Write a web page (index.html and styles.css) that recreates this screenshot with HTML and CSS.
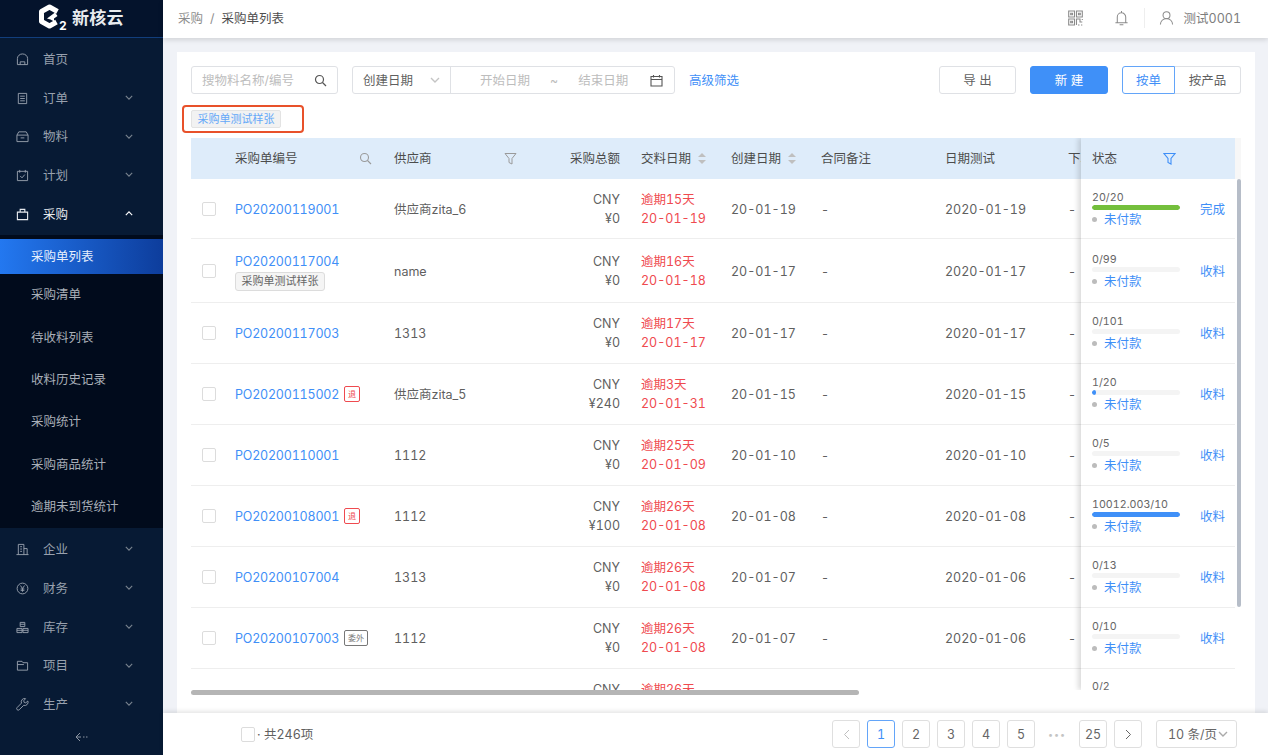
FILE: index.html
```html
<!DOCTYPE html>
<html lang="zh-CN">
<head>
<meta charset="utf-8">
<title>采购单列表</title>
<link rel="stylesheet" href="styles.css">
</head>
<body>
<svg class="defs" width="0" height="0">
  <symbol id="chev" viewBox="0 0 10 6"><path d="M1 1l4 4 4-4" fill="none" stroke="currentColor" stroke-width="1.4"/></symbol>
</svg>
<aside class="sidebar">
  <div class="brand">
    <svg class="logo" width="26" height="26" viewBox="0 0 26 26"><path d="M20.500 7.500L12.500 3 4.500 7.500v10l8 4.500 7-4" fill="none" stroke="#fff" stroke-width="5" stroke-linejoin="round"/><path d="M10 14.500l8-6 2.500 3.500-3.500 2.500v3l-3.500-2z" fill="#fff"/></svg>
    <span class="logo-sub">2</span>
    <span class="brand-name">新核云</span>
  </div>
  <nav class="nav">
    <a class="nav-item"><svg class="nav-icon" viewBox="0 0 14 14"><path d="M1.500 12.500V6a5.500 5 0 0 1 11 0v6.500zM4.500 12.500v-3h5v3" fill="none" stroke="currentColor"/></svg><span>首页</span></a>
    <a class="nav-item"><svg class="nav-icon" viewBox="0 0 14 14"><path d="M2.500 1.500h9v11h-9zM4.500 4.500h5M4.500 7h5M4.500 9.500h5" fill="none" stroke="currentColor"/></svg><span>订单</span><svg class="chev"><use href="#chev"/></svg></a>
    <a class="nav-item"><svg class="nav-icon" viewBox="0 0 14 14"><path d="M3 2h8l2 3.500V12.500H1V5.500zM1 5.500h12M5 8.500h4" fill="none" stroke="currentColor"/></svg><span>物料</span><svg class="chev"><use href="#chev"/></svg></a>
    <a class="nav-item"><svg class="nav-icon" viewBox="0 0 14 14"><path d="M1.500 2.500h11v10h-11zM4 1v3M10 1v3M4.500 7.500l2 2 3-3.500" fill="none" stroke="currentColor"/></svg><span>计划</span><svg class="chev"><use href="#chev"/></svg></a>
    <a class="nav-item open"><svg class="nav-icon" viewBox="0 0 14 14"><path d="M1.500 4.500h11v8h-11zM4.500 4.500V1.500h5v3" fill="none" stroke="currentColor" stroke-width="1.200"/></svg><span>采购</span><svg class="chev up"><use href="#chev"/></svg></a>
    <div class="subnav">
      <a class="sub-item active">采购单列表</a>
      <a class="sub-item">采购清单</a>
      <a class="sub-item">待收料列表</a>
      <a class="sub-item">收料历史记录</a>
      <a class="sub-item">采购统计</a>
      <a class="sub-item">采购商品统计</a>
      <a class="sub-item">逾期未到货统计</a>
    </div>
    <a class="nav-item"><svg class="nav-icon" viewBox="0 0 14 14"><path d="M0.500 12.500h13M2.500 12.500v-11h6v11M8.500 6h3.500v6.500M4.500 4h2M4.500 6.500h2M4.500 9h2" fill="none" stroke="currentColor"/></svg><span>企业</span><svg class="chev"><use href="#chev"/></svg></a>
    <a class="nav-item"><svg class="nav-icon" viewBox="0 0 14 14"><circle cx="7" cy="7" r="5.800" fill="none" stroke="currentColor"/><path d="M4.800 3.800L7 7l2.200-3.200M7 7v3.500M5 7.500h4M5 9h4" fill="none" stroke="currentColor"/></svg><span>财务</span><svg class="chev"><use href="#chev"/></svg></a>
    <a class="nav-item"><svg class="nav-icon" viewBox="0 0 14 14"><path d="M4.500 1.500h5v4.500h-5zM1 8h5.500v4.500H1zM7.500 8H13v4.500H7.500zM1 10h12M4.500 3.500h5" fill="none" stroke="currentColor"/></svg><span>库存</span><svg class="chev"><use href="#chev"/></svg></a>
    <a class="nav-item"><svg class="nav-icon" viewBox="0 0 14 14"><path d="M1.500 2.500h5l1 1.500h5v8h-11zM1.500 6h7" fill="none" stroke="currentColor"/></svg><span>项目</span><svg class="chev"><use href="#chev"/></svg></a>
    <a class="nav-item"><svg class="nav-icon" viewBox="0 0 14 14"><path d="M12.800 3.200l-2.300 2-1.700-.5-.5-1.700 2-2.300a3.600 3.600 0 0 0-4.400 4.800L1.200 10.300a1.500 1.500 0 0 0 2.300 2.300l4.800-4.700a3.600 3.600 0 0 0 4.500-4.700z" fill="none" stroke="currentColor"/></svg><span>生产</span><svg class="chev"><use href="#chev"/></svg></a>
  </nav>
  <div class="collapse"><svg width="14" height="10" viewBox="0 0 14 10"><path d="M5 1L1 5l4 4M1 5h5M8 5h1.500M11 5h1.500" fill="none" stroke="currentColor"/></svg></div>
</aside>

<div class="main">
  <header class="topbar">
    <div class="crumbs"><span>采购</span><span class="sep">/</span><span class="current">采购单列表</span></div>
    <div class="top-actions">
      <svg class="top-icon" viewBox="0 0 15 16"><path d="M.700 1h5.800v6H.700zM8.500 1h5.800v6H8.500zM.700 9h5.800v6H.700zM2.700 3.300h1.800v1.500H2.700zM10.500 3.300h1.800v1.500h-1.800zM2.700 11.300h1.800v1.500H2.700zM8.500 15v-6h3.500v3h2.300M14.300 9v1M10 15h1.500M13 15h1.300" fill="none" stroke="currentColor" stroke-width="1.100"/></svg>
      <svg class="top-icon bell" viewBox="0 0 16 16"><path d="M1.500 13h13M3.500 13V7a4.500 4.500 0 0 1 9 0v6M8 .500v2M6 15.200h4" fill="none" stroke="currentColor" stroke-width="1.100"/></svg>
      <i class="top-divider"></i>
      <svg class="top-icon user" viewBox="0 0 16 16"><circle cx="8" cy="5" r="3.700" fill="none" stroke="currentColor" stroke-width="1.100"/><path d="M1.500 15a6.500 6.500 0 0 1 13 0" fill="none" stroke="currentColor" stroke-width="1.100"/></svg>
      <span class="user-name">测试0001</span>
    </div>
  </header>

  <div class="content">
    <section class="card">
      <div class="toolbar">
        <div class="search field"><span class="ph">搜物料名称/编号</span><svg class="ico-dark" width="13" height="13" viewBox="0 0 13 13"><circle cx="5.500" cy="5.500" r="4" fill="none" stroke="currentColor" stroke-width="1.200"/><path d="M8.500 8.500l3.500 3.500" stroke="currentColor" stroke-width="1.200"/></svg></div>
        <div class="dates field">
          <div class="date-type"><span>创建日期</span><svg class="date-chev"><use href="#chev"/></svg></div>
          <div class="date-range"><span class="ph start">开始日期</span><span class="ph tilde">~</span><span class="ph end">结束日期</span><svg class="ico-dark" width="13" height="13" viewBox="0 0 13 13"><path d="M1 2.500h11v9.500H1zM1 5.500h11M3.500 1v2.500M9.500 1v2.500" fill="none" stroke="currentColor" stroke-width="1.100"/></svg></div>
        </div>
        <a class="adv">高级筛选</a>
        <div class="tool-right">
          <button class="btn export">导 出</button>
          <button class="btn primary">新 建</button>
          <div class="seg"><button class="seg-btn on">按单</button><button class="seg-btn">按产品</button></div>
        </div>
      </div>

      <div class="tag-row"><div class="tag-frame"><span class="tag-blue">采购单测试样张</span></div></div>

      <div class="table-wrap">
        <div class="table">
          <div class="pane-scroll">
            <div class="row head">
              <div class="c-check"></div>
              <div class="c-no">采购单编号<svg class="head-ico" width="13" height="13" viewBox="0 0 13 13"><circle cx="5.500" cy="5.500" r="4" fill="none" stroke="currentColor" stroke-width="1.100"/><path d="M8.500 8.500l3.500 3.500" stroke="currentColor" stroke-width="1.100"/></svg></div>
              <div class="c-sup">供应商<svg class="head-ico filter" width="13" height="13" viewBox="0 0 13 13"><path d="M1 1.500h11L8 6.500V12L5 10.500V6.500z" fill="none" stroke="currentColor"/></svg></div>
              <div class="c-amt">采购总额</div>
              <div class="c-due sortable">交料日期<i class="sort"></i></div>
              <div class="c-date sortable">创建日期<i class="sort"></i></div>
              <div class="c-note">合同备注</div>
              <div class="c-test">日期测试</div>
              <div class="c-next">下单人</div>
            </div>
            <div class="row r60"><div class="c-check"><i class="cb"></i></div><div class="c-no"><a>PO20200119001</a></div><div class="c-sup">供应商zita_6</div><div class="c-amt">CNY<br>¥0</div><div class="c-due red">逾期15天<br>20-01-19</div><div class="c-date">20-01-19</div><div class="c-note">-</div><div class="c-test">2020-01-19</div><div class="c-next">-</div></div>
            <div class="row r64"><div class="c-check"><i class="cb"></i></div><div class="c-no stack"><a>PO20200117004</a><span class="tag-grey">采购单测试样张</span></div><div class="c-sup">name</div><div class="c-amt">CNY<br>¥0</div><div class="c-due red">逾期16天<br>20-01-18</div><div class="c-date">20-01-17</div><div class="c-note">-</div><div class="c-test">2020-01-17</div><div class="c-next">-</div></div>
            <div class="row"><div class="c-check"><i class="cb"></i></div><div class="c-no"><a>PO20200117003</a></div><div class="c-sup">1313</div><div class="c-amt">CNY<br>¥0</div><div class="c-due red">逾期17天<br>20-01-17</div><div class="c-date">20-01-17</div><div class="c-note">-</div><div class="c-test">2020-01-17</div><div class="c-next">-</div></div>
            <div class="row"><div class="c-check"><i class="cb"></i></div><div class="c-no"><a>PO20200115002</a><span class="mini red-mini">退</span></div><div class="c-sup">供应商zita_5</div><div class="c-amt">CNY<br>¥240</div><div class="c-due red">逾期3天<br>20-01-31</div><div class="c-date">20-01-15</div><div class="c-note">-</div><div class="c-test">2020-01-15</div><div class="c-next">-</div></div>
            <div class="row"><div class="c-check"><i class="cb"></i></div><div class="c-no"><a>PO20200110001</a></div><div class="c-sup">1112</div><div class="c-amt">CNY<br>¥0</div><div class="c-due red">逾期25天<br>20-01-09</div><div class="c-date">20-01-10</div><div class="c-note">-</div><div class="c-test">2020-01-10</div><div class="c-next">-</div></div>
            <div class="row"><div class="c-check"><i class="cb"></i></div><div class="c-no"><a>PO20200108001</a><span class="mini red-mini">退</span></div><div class="c-sup">1112</div><div class="c-amt">CNY<br>¥100</div><div class="c-due red">逾期26天<br>20-01-08</div><div class="c-date">20-01-08</div><div class="c-note">-</div><div class="c-test">2020-01-08</div><div class="c-next">-</div></div>
            <div class="row"><div class="c-check"><i class="cb"></i></div><div class="c-no"><a>PO20200107004</a></div><div class="c-sup">1313</div><div class="c-amt">CNY<br>¥0</div><div class="c-due red">逾期26天<br>20-01-08</div><div class="c-date">20-01-07</div><div class="c-note">-</div><div class="c-test">2020-01-06</div><div class="c-next">-</div></div>
            <div class="row"><div class="c-check"><i class="cb"></i></div><div class="c-no"><a>PO20200107003</a><span class="mini grey-mini">委外</span></div><div class="c-sup">1112</div><div class="c-amt">CNY<br>¥0</div><div class="c-due red">逾期26天<br>20-01-08</div><div class="c-date">20-01-07</div><div class="c-note">-</div><div class="c-test">2020-01-06</div><div class="c-next">-</div></div>
            <div class="row"><div class="c-check"><i class="cb"></i></div><div class="c-no"></div><div class="c-sup"></div><div class="c-amt">CNY<br>¥0</div><div class="c-due red">逾期26天<br>20-01-08</div><div class="c-date"></div><div class="c-note"></div><div class="c-test"></div><div class="c-next"></div></div>
          </div>
          <div class="pane-fixed">
            <div class="frow head"><span>状态</span><svg class="status-filter" width="13" height="13" viewBox="0 0 13 13"><path d="M1 1.500h11L8 6.500V12L5 10.500V6.500z" fill="none" stroke="currentColor" stroke-width="1.100"/></svg></div>
            <div class="frow r60"><div class="st"><div class="st-num">20/20</div><div class="bar"><i class="fill green full"></i></div><div class="pay"><i class="dot"></i>未付款</div></div><a class="act">完成</a></div>
            <div class="frow r64"><div class="st"><div class="st-num">0/99</div><div class="bar"></div><div class="pay"><i class="dot"></i>未付款</div></div><a class="act">收料</a></div>
            <div class="frow"><div class="st"><div class="st-num">0/101</div><div class="bar"></div><div class="pay"><i class="dot"></i>未付款</div></div><a class="act">收料</a></div>
            <div class="frow"><div class="st"><div class="st-num">1/20</div><div class="bar"><i class="fill blue small"></i></div><div class="pay"><i class="dot"></i>未付款</div></div><a class="act">收料</a></div>
            <div class="frow"><div class="st"><div class="st-num">0/5</div><div class="bar"></div><div class="pay"><i class="dot"></i>未付款</div></div><a class="act">收料</a></div>
            <div class="frow"><div class="st"><div class="st-num">10012.003/10</div><div class="bar"><i class="fill blue full"></i></div><div class="pay"><i class="dot"></i>未付款</div></div><a class="act">收料</a></div>
            <div class="frow"><div class="st"><div class="st-num">0/13</div><div class="bar"></div><div class="pay"><i class="dot"></i>未付款</div></div><a class="act">收料</a></div>
            <div class="frow"><div class="st"><div class="st-num">0/10</div><div class="bar"></div><div class="pay"><i class="dot"></i>未付款</div></div><a class="act">收料</a></div>
            <div class="frow"><div class="st clip-top"><div class="st-num">0/2</div></div></div>
          </div>
        </div>
        <div class="head-cap"></div>
        <div class="vbar"></div>
        <div class="hbar"></div>
      </div>
    </section>
  </div>

  <footer class="footer">
    <div class="foot-left"><i class="cb"></i><span>· 共246项</span></div>
    <div class="pager">
      <span class="pg muted"><svg width="7" height="11" viewBox="0 0 7 11"><path d="M6 1L1.500 5.500 6 10" fill="none" stroke="currentColor"/></svg></span>
      <span class="pg on">1</span><span class="pg">2</span><span class="pg">3</span><span class="pg">4</span><span class="pg">5</span>
      <span class="dots">•••</span>
      <span class="pg">25</span>
      <span class="pg"><svg width="7" height="11" viewBox="0 0 7 11"><path d="M1 1l4.500 4.500L1 10" fill="none" stroke="currentColor"/></svg></span>
      <span class="size">10 条/页<svg class="size-chev"><use href="#chev"/></svg></span>
    </div>
  </footer>
</div>
</body>
</html>
```
FILE: styles.css
```css
* { box-sizing: border-box; }
html, body { margin: 0; height: 100%; overflow: hidden; }
body {
  display: flex;
  width: 1268px;
  height: 755px;
  background: #f0f2f7;
  font: 12.5px/19px Inter, "Noto Sans CJK SC", sans-serif;
  font-variant-numeric: tabular-nums;
  color: #5f5f5f;
}
.defs { position: absolute; }
a { color: inherit; text-decoration: none; }
i { font-style: normal; }
button { font: inherit; cursor: pointer; }

/* sidebar */
.sidebar {
  width: 163px;
  flex: none;
  display: flex;
  flex-direction: column;
  background: #071a34;
  color: #98a1ae;
  position: relative;
}
.brand {
  height: 38px;
  flex: none;
  background: #04132c;
  border-bottom: 1px solid #123e7c;
  display: flex;
  align-items: center;
  padding-left: 37px;
  color: #fff;
}
.logo { margin-top: -4px; width: 26px; height: 26px; flex: none; }
.logo-sub { font-size: 12px; font-weight: 700; width: 8px; margin: 15px 0 0 -4px; line-height: 12px; }
.brand-name { font-size: 17px; font-weight: 700; letter-spacing: .2px; margin-left: 5px; color: #e8ebef; }
.nav { flex: 1; display: flex; flex-direction: column; padding-top: 2px; }
.nav-item {
  height: 38.750px;
  flex: none;
  display: flex;
  align-items: center;
  padding-left: 16px;
  position: relative;
}
.nav-item span { margin-left: 14px; }
.nav-icon { width: 13px; height: 13px; color: #98a1ae; flex: none; }
.chev { width: 8px; height: 5px; position: absolute; left: 125px; top: 16px; color: #79838f; }
.chev.up { transform: rotate(180deg); color: #fff; }
.nav-item.open, .nav-item.open .nav-icon { color: #e8ebef; }
.subnav {
  height: 293px;
  flex: none;
  margin: 1px 0 2.500px;
  background: #010b1c;
  padding-top: 4px;
  display: flex;
  flex-direction: column;
  color: #a9afb8;
}
.sub-item {
  height: 42.300px;
  flex: none;
  display: flex;
  align-items: center;
  padding-left: 31px;
}
.sub-item.active {
  height: 35px;
  color: #e6effc;
  background: linear-gradient(90deg, #2378f0, #0d3d9c);
}
.collapse {
  position: absolute;
  left: 75px;
  top: 732px;
  color: #8d96a3;
  line-height: 10px;
}

/* main */
.main { flex: 1; min-width: 0; display: flex; flex-direction: column; }
.topbar {
  height: 38px;
  flex: none;
  background: #fff;
  box-shadow: 0 2px 5px rgba(0,0,0,.13);
  display: flex;
  align-items: center;
  justify-content: space-between;
  padding: 0 27px 2px 15px;
  position: relative;
  z-index: 3;
}
.crumbs { display: flex; color: #8e8e8e; }
.sep { margin: 0 7px; }
.current { color: #4e4e4e; }
.top-actions { display: flex; align-items: center; color: #8b8b8b; }
.top-icon { width: 15px; height: 16px; flex: none; }
.bell { margin-left: 31px; }
.top-divider { width: 1px; height: 20px; background: #eee; margin: 0 14px 0 15px; }
.user { margin-right: 10px; }
.user-name { color: #7d7d7d; }

.content { flex: 1; min-height: 0; padding: 14px 13px 0 14px; }
.card { height: 100%; background: #fff; padding: 14px 14px 0; position: relative; }
.toolbar { display: flex; height: 28px; align-items: stretch; }
.field { border: 1px solid #dfe1e5; border-radius: 3px; display: flex; align-items: center; }
.ph { color: #bdbdbd; }
.ico-dark { color: #555; flex: none; }
.search { width: 147px; justify-content: space-between; padding: 0 10px; }
.dates { width: 323px; margin-left: 14px; }
.date-type { width: 98px; height: 100%; border-right: 1px solid #dfe1e5; display: flex; align-items: center; justify-content: space-between; padding: 0 10px; color: #5f5f5f; }
.date-chev { width: 10px; height: 6px; color: #c4c4c4; }
.date-range { flex: 1; display: flex; align-items: center; padding: 0 10px 0 29px; }
.tilde { margin-left: 20px; }
.end { margin-left: 20px; margin-right: 22px; }
.adv { color: #3f8ff7; margin-left: 14px; align-self: center; }
.tool-right { margin-left: auto; display: flex; gap: 14px; }
.btn { border: 1px solid #dfe1e5; background: #fff; border-radius: 3px; width: 77px; color: #5f5f5f; padding: 0; }
.btn.primary { width: 78px; background: #3f90f8; border-color: #3f90f8; color: #fff; }
.seg { display: flex; }
.seg-btn { width: 66px; border: 1px solid #dfe1e5; border-left: 0; background: #fff; border-radius: 0 3px 3px 0; color: #5f5f5f; padding: 0; }
.seg-btn.on { width: 53px; border: 1px solid #63a5f9; border-radius: 3px 0 0 3px; color: #3f8ff7; }

.tag-row { margin: 11px 0 5px -9px; height: 28px; }
.tag-frame { width: 122px; height: 28px; border: 2px solid #e8512a; border-radius: 4px; padding: 3px 7px; }
.tag-blue { display: block; width: 90px; height: 18px; background: #f2f2f2; border: 1px solid #e3e3e3; border-radius: 2px; color: #64a8f8; font-size: 11px; line-height: 16px; text-align: center; white-space: nowrap; }

/* table */
.table-wrap { position: relative; width: 1050px; height: 558px; }
.table { display: flex; width: 1044px; height: 552px; overflow: hidden; }
.pane-scroll { width: 890px; flex: none; overflow: hidden; }
.row {
  display: grid;
  grid-template-columns: 44px 159px 100px 126px 111px 90px 124px 123px 80px;
  width: 957px;
  height: 61px;
  align-items: center;
  border-bottom: 1px solid #eeeeee;
}
.row.r60, .frow.r60 { height: 60px; padding-top: 1px; }
.row.r64, .frow.r64 { height: 64px; padding-top: 1px; }
.head, .frow.head {
  height: 41px;
  background: #deecfa;
  border-bottom: 0;
  color: #4c4c4c;
}
.c-check { padding-left: 11px; display: flex; }
.cb { display: block; width: 14px; height: 14px; border: 1px solid #dcdcdc; border-radius: 2px; background: #fff; flex: none; }
.c-no { display: flex; align-items: center; position: relative; white-space: nowrap; }
.c-no a { letter-spacing: -.2px; }
.c-no a, .act, .pay { color: #3f8ff7; }
.c-no.stack { flex-direction: column; align-items: flex-start; }
.c-sup { position: relative; white-space: nowrap; }
.c-amt { text-align: right; }
.c-due { padding-left: 21px; position: relative; }
.c-next { white-space: nowrap; }
.red { color: #ef4a4f; }
.sortable { display: flex; align-items: center; }
.sort { display: block; position: relative; width: 8px; height: 11px; margin-left: 7px; }
.sort::before, .sort::after { content: ""; position: absolute; left: 0; border-left: 4px solid transparent; border-right: 4px solid transparent; }
.sort::before { top: 0; border-bottom: 4px solid #bfbfbf; }
.sort::after { bottom: 0; border-top: 4px solid #bfbfbf; }
.head-ico { position: absolute; left: 124px; top: 3px; color: #9a9a9a; }
.head-ico.filter { left: 110px; }
.tag-grey { display: block; height: 19px; width: 90px; margin-top: 1px; background: #f5f5f5; border: 1px solid #dcdcdc; border-radius: 3px; font-size: 11px; line-height: 17px; text-align: center; color: #666; }
.mini { display: inline-block; height: 16px; margin-left: 5px; border: 1px solid; border-radius: 2px; font-size: 8px; line-height: 14px; text-align: center; }
.red-mini { width: 16px; color: #ef4a4f; }
.grey-mini { width: 24px; color: #777; }

.pane-fixed { width: 154px; flex: none; background: #fff; box-shadow: -3px 0 5px rgba(0,0,0,.14); position: relative; }
.frow { height: 61px; display: flex; align-items: center; padding-left: 11px; border-bottom: 1px solid #eeeeee; position: relative; }
.status-filter { position: absolute; left: 82px; top: 14px; color: #3f8ff7; }
.st { width: 88px; }
.clip-top { align-self: flex-start; padding-top: 9px; }
.st-num { font-size: 10.700px; line-height: 14px; margin: 2px 0 -1px; color: #666; white-space: nowrap; }
.bar { height: 5px; border-radius: 3px; background: #f4f4f4; margin-top: 1px; overflow: hidden; }
.fill { display: block; height: 100%; border-radius: 3px; }
.green { background: #74bf3c; }
.blue { background: #3f90f8; }
.full { width: 100%; }
.small { width: 5%; }
.pay { display: flex; align-items: center; line-height: 20px; }
.dot { width: 5px; height: 5px; border-radius: 50%; background: #bcbcbc; margin-right: 7px; }
.act { margin-left: 20px; }
.head-cap { position: absolute; left: 1044px; top: 0; width: 6px; height: 41px; background: #f7f7f7; }
.vbar { position: absolute; left: 1046px; top: 41px; width: 4px; height: 428px; border-radius: 2px; background: #b6bdc8; }
.hbar { position: absolute; left: 0; top: 552px; width: 668px; height: 5px; border-radius: 3px; background: #b5b5b5; }

/* footer */
.footer {
  height: 42px;
  flex: none;
  background: #fff;
  box-shadow: 0 -2px 4px rgba(0,0,0,.1);
  display: flex;
  align-items: center;
  padding: 0 31px 0 78px;
  position: relative;
  z-index: 2;
}
.foot-left { display: flex; align-items: center; gap: 2px; }
.foot-left .cb { width: 14px; height: 15px; }
.pager { margin-left: auto; display: flex; align-items: center; gap: 7px; }
.pg { width: 28px; height: 28px; border: 1px solid #dfdfdf; border-radius: 3px; display: flex; align-items: center; justify-content: center; color: #666; }
.pg.muted { color: #bfbfbf; }
.pg.on { border-color: #63a5f9; color: #3f8ff7; }
.dots { width: 30px; text-align: center; color: #c4c4c4; font-size: 9px; letter-spacing: 1px; }
.size { width: 81px; height: 28px; margin-left: 7px; border: 1px solid #dfdfdf; border-radius: 3px; display: flex; align-items: center; padding-left: 11px; color: #666; white-space: nowrap; }
.size-chev { width: 10px; height: 6px; margin-left: 1px; color: #aaa; }
```
